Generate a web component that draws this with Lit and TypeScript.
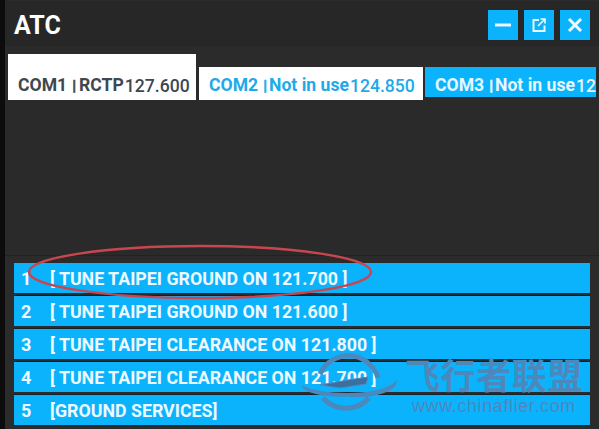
import { LitElement, html, css } from "lit";
import { customElement } from "lit/decorators.js";

const rows = [
  ["1", "[ TUNE TAIPEI GROUND ON 121.700 ]"],
  ["2", "[ TUNE TAIPEI GROUND ON 121.600 ]"],
  ["3", "[ TUNE TAIPEI CLEARANCE ON 121.800 ]"],
  ["4", "[ TUNE TAIPEI CLEARANCE ON 121.700 ]"],
  ["5", "[GROUND SERVICES]"],
];

@customElement("app-root")
export class AppRoot extends LitElement {
  static styles = css`
    :host {
      display: block;
      width: 599px;
      height: 429px;
      background: #0c0c0c;
      overflow: hidden;
      position: relative;
      font-family: Roboto, "Liberation Sans", sans-serif;
    }
    .win {
      margin-left: 5px;
      height: 429px;
      padding-top: 1px;
      box-sizing: border-box;
      background: #2b2b2b;
      display: flex;
      flex-direction: column;
    }
    .head {
      height: 45px;
      flex: none;
      background: #272727;
      display: flex;
      align-items: center;
      justify-content: space-between;
      padding: 3px 4px 0 9px;
      box-sizing: border-box;
    }
    .title {
      color: #fff;
      font-size: 25px;
      font-weight: 700;
    }
    .btns { display: flex; gap: 6px; margin-right: 5px; }
    .btn {
      width: 30px;
      height: 30px;
      background: #0bb3fd;
      display: flex;
      align-items: center;
      justify-content: center;
    }
    .tabs {
      margin-top: 8px;
      padding-left: 3px;
      height: 46px;
      flex: none;
      display: flex;
      align-items: flex-start;
      gap: 3px;
      overflow: hidden;
    }
    .tab {
      box-sizing: border-box;
      flex: none;
      display: flex;
      align-items: flex-start;
      white-space: nowrap;
      overflow: hidden;
      font-weight: 700;
      font-size: 17.6px;
      line-height: 21px;
      padding-left: 10px;
      margin-top: 13px;
      height: 33px;
      padding-top: 8px;
      background: #fff;
      color: #1eaaea;
    }
    .tab .sep {
      font-size: 15px;
      margin: 1px 2px 0 5px;
      font-weight: 900;
      -webkit-text-stroke: 0.6px currentColor;
    }
    .tab .freq { font-size: 17.6px; margin: 1px 0 0 1px; font-weight: 500; }
    .tab.active {
      width: 188px;
      height: 46px;
      margin-top: 0;
      padding-top: 21px;
      color: #3f4750;
    }
    .tab.active .sep { margin-right: 3px; }
    .tab.c2 { width: 224px; }
    .tab.c3 {
      width: 171px;
      height: 30px;
      background: #0bb3fd;
      color: #e8f7ff;
      margin-left: -1px;
    }
    .body {
      height: 155px;
      flex: none;
      background: #2a2a2a;
      border-bottom: 1px solid #222;
    }
    .list {
      margin: 7px 9px 0 9px;
      display: flex;
      flex-direction: column;
      gap: 3px;
    }
    .row {
      height: 30px;
      box-sizing: border-box;
      background: #0bb3fd;
      color: #eef9ff;
      font-size: 17.8px;
      font-weight: 700;
      display: flex;
      align-items: center;
      padding: 1px 0 0 7px;
      white-space: nowrap;
    }
    .row .n { width: 29px; font-size: 18px; flex: none; }
    .row + .row { box-shadow: 0 -1px 0 #10222c; }
    .ring { position: absolute; left: 0; top: 0; pointer-events: none; }
    .wm {
      position: absolute;
      left: 405px;
      top: 353px;
      color: #4d88bd;
      pointer-events: none;
      white-space: nowrap;
    }
    .wm .cn {
      font-family: "Noto Sans CJK SC", sans-serif;
      font-size: 35px;
      line-height: 42px;
      font-weight: 700;
      letter-spacing: 0.6px;
    }
    .wm .url {
      font-family: "Liberation Sans", sans-serif;
      font-size: 18px;
      letter-spacing: 0.6px;
      line-height: 20px;
      margin: 1px 0 0 7px;
    }
  `;

  tab(name: string, st: string, fr: string, cls: string) {
    return html`<div class="tab ${cls}">
      <span>${name}</span><span class="sep">|</span><span>${st}</span
      ><span class="freq">${fr}</span>
    </div>`;
  }

  render() {
    return html`
      <div class="win">
        <div class="head">
          <div class="title">ATC</div>
          <div class="btns">
            <div class="btn">
              <svg width="16" height="16" viewBox="0 0 16 16"><rect x="0" y="6.5" width="16" height="3" fill="#e8f8ff"/></svg>
            </div>
            <div class="btn">
              <svg width="16" height="16" viewBox="0 0 16 16" fill="none" stroke="#e8f8ff" stroke-width="2">
                <path d="M8 3H2.5v11h11V8.5"/><path d="M7 9 13.5 2.5M9.5 2H14V6.5" stroke-width="1.7"/>
              </svg>
            </div>
            <div class="btn">
              <svg width="16" height="16" viewBox="0 0 16 16" stroke="#eefaff" stroke-width="3"><path d="M2 2 14 14M14 2 2 14"/></svg>
            </div>
          </div>
        </div>
        <div class="tabs">
          ${this.tab("COM1", "RCTP", "127.600", "active")}
          ${this.tab("COM2", "Not in use", "124.850", "c2")}
          ${this.tab("COM3", "Not in use", "121.500", "c3")}
        </div>
        <div class="body"></div>
        <div class="list">
          ${rows.map(([n, t]) => html`<div class="row"><span class="n">${n}</span><span>${t}</span></div>`)}
        </div>
      </div>
      <svg class="ring" width="599" height="429" viewBox="0 0 599 429" fill="none">
        <ellipse cx="200" cy="272" rx="171" ry="26" stroke="#c8474f" stroke-width="2.5"/>
        <g stroke="#4d88bd" fill="none">
          <path d="M320 374A31 31 0 0 1 378 378" stroke-width="5"/>
          <path d="M323 398A31 31 0 0 0 369 398" stroke-width="5"/>
          <path d="M302 386C318 396 378 398 396 382C396 390 376 398 348 396C322 396 306 392 302 386Z" fill="#4d88bd" stroke-width="1.5"/>
          <path d="M320 385 348 380 368 377 366 384 340 388Z" fill="#3d6f9e" stroke-width="1"/>
        </g>
      </svg>
      <div class="wm">
        <div class="cn">飞行者联盟</div>
        <div class="url">www.chinaflier.com</div>
      </div>
    `;
  }
}
